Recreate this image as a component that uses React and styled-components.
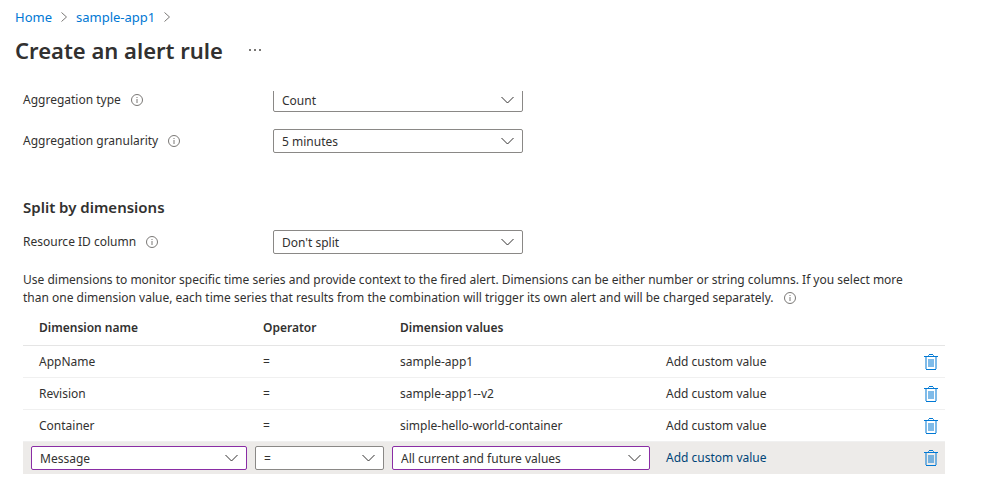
import React from "react";
import styled, { createGlobalStyle } from "styled-components";

const GlobalStyle = createGlobalStyle`
  *, *::before, *::after { box-sizing: border-box; }
  body {
    margin: 0;
    background: #fff;
    color: #323130;
    font: 12px/18px "Noto Sans", "Open Sans", sans-serif;
  }
  button, select { font: inherit; color: inherit; }
`;

const Page = styled.div`
  padding: 8px 0 30px;
`;

const Breadcrumb = styled.nav`
  display: flex;
  align-items: center;
  gap: 9px;
  padding-left: 15px;
  font-size: 13px;
  line-height: 18px;
  color: #605e5c;
`;

const Crumb = styled.a`
  color: #0078d4;
  text-decoration: none;
`;

const TitleBar = styled.header`
  display: flex;
  align-items: center;
  gap: 26px;
  height: 32px;
  margin: 8px 0 25px;
  padding-left: 15px;
`;

const Title = styled.h1`
  margin: 0;
  font-size: 22px;
  font-weight: 600;
  line-height: 32px;
`;

const IconButton = styled.button`
  display: inline-flex;
  align-items: center;
  justify-content: center;
  padding: 0;
  border: 0;
  background: none;
  vertical-align: middle;
  cursor: pointer;
`;

const Content = styled.main`
  overflow: hidden;
  padding: 0 36px 0 23px;
`;

const Field = styled.div`
  display: flex;
  align-items: center;
  height: 24px;
  margin-top: ${(p) => (p.$clipped ? "-3px" : "0")};
  margin-bottom: ${(p) => (p.$clipped ? "17px" : "0")};
`;

const FieldLabel = styled.div`
  display: flex;
  align-items: center;
  gap: 10px;
  width: 250px;
`;

const SelectBox = styled.div`
  display: grid;
  align-items: center;
  width: ${(p) => p.$width || "100%"};
  > * { grid-area: 1 / 1; }
  > svg {
    justify-self: end;
    margin-right: 9px;
    pointer-events: none;
  }
`;

const Select = styled.select`
  appearance: none;
  width: 100%;
  height: 24px;
  padding: 1px 28px 0 8px;
  border: 1px solid ${(p) => (p.$edited ? "#8a2da5" : "#8a8886")};
  border-radius: 2px;
  background: #fff;
  line-height: 18px;
`;

const SectionTitle = styled.h2`
  margin: 44px 0 12px;
  font-size: 15px;
  font-weight: 600;
  line-height: 21px;
`;

const Description = styled.p`
  max-width: 900px;
  margin: 17px 0 3px;
`;

const DescriptionInfo = styled.span`
  display: inline-flex;
  margin-left: 10px;
  vertical-align: -2px;
`;

const Table = styled.table`
  width: 100%;
  table-layout: fixed;
  border-collapse: separate;
  border-spacing: 0;
`;

const Column = styled.col`
  width: ${(p) => p.$width || "auto"};
`;

const HeadCell = styled.th`
  height: 36px;
  padding: 0 0 0 16px;
  border-bottom: 1px solid #e5e5e5;
  font-weight: 600;
  text-align: left;
`;

const Row = styled.tr`
  background: ${(p) => (p.$active ? "#edebe9" : "transparent")};
`;

const Cell = styled.td`
  height: 32px;
  padding: 0 0 0 ${(p) => (p.$control ? "8px" : "16px")};
  border-bottom: ${(p) => (p.$last ? "0" : "1px solid #f0f0f0")};
  vertical-align: middle;
`;

const ActionCell = styled(Cell)`
  padding: 0 7px 0 0;
  text-align: right;
  line-height: 0;
`;

const CustomValue = styled.button`
  display: block;
  padding: 0;
  border: 0;
  background: none;
  color: ${(p) => (p.$active ? "#004578" : "inherit")};
  line-height: 18px;
  cursor: pointer;
`;

const CrumbArrow = () => (
  <svg width="6" height="10" viewBox="0 0 6 10" fill="none" stroke="#797775" aria-hidden="true">
    <path d="M.5.5 5.5 5 .5 9.5" />
  </svg>
);

const Chevron = () => (
  <svg width="13" height="8" viewBox="0 0 13 8" fill="none" stroke="#323130" aria-hidden="true">
    <path d="M.5 1 6.500 7 12.500 1" />
  </svg>
);

const InfoIcon = () => (
  <svg width="12" height="12" viewBox="0 0 12 12" fill="none" stroke="#797775" aria-hidden="true">
    <circle cx="6" cy="6" r="5.5" />
    <path d="M6 5v4M6 3v1" />
  </svg>
);

const TrashIcon = () => (
  <svg width="14" height="16" viewBox="0 0 14 16" aria-hidden="true">
    <path d="M1 3h2v12H1zM11 3h2v12h-2zM4 5h6v8H4z" fill="#0078d4" opacity=".5" />
    <path d="M0 2h14v1H0zM2 15h10v1H2zM5 0h4v1H5z" fill="#0078d4" />
    <path d="M4 1h1v1H4zM9 1h1v1H9z" fill="#0078d4" opacity=".7" />
  </svg>
);

const MoreIcon = () => (
  <svg width="12" height="2" viewBox="0 0 12 2" fill="#797775" aria-hidden="true">
    <path d="M0 0h2v2H0zM5 0h2v2H5zM10 0h2v2h-2z" />
  </svg>
);

function Dropdown({ id, value, label, width, edited }) {
  return (
    <SelectBox $width={width}>
      <Select id={id} aria-label={label} $edited={edited} defaultValue={value}>
        <option>{value}</option>
      </Select>
      <Chevron />
    </SelectBox>
  );
}

function SelectField({ id, label, value, clipped }) {
  return (
    <Field $clipped={clipped}>
      <FieldLabel>
        <label htmlFor={id}>{label}</label>
        <IconButton type="button" aria-label={`About ${label}`}>
          <InfoIcon />
        </IconButton>
      </FieldLabel>
      <Dropdown id={id} value={value} width="250px" />
    </Field>
  );
}

const dimensions = [
  { name: "AppName", operator: "=", values: "sample-app1" },
  { name: "Revision", operator: "=", values: "sample-app1--v2" },
  { name: "Container", operator: "=", values: "simple-hello-world-container" },
];

function RowActions({ name, active }) {
  return (
    <>
      <Cell $last={active}>
        <CustomValue type="button" $active={active}>Add custom value</CustomValue>
      </Cell>
      <ActionCell $last={active}>
        <IconButton type="button" aria-label={`Delete ${name}`}>
          <TrashIcon />
        </IconButton>
      </ActionCell>
    </>
  );
}

export default function App() {
  return (
    <>
      <GlobalStyle />
      <Page>
        <Breadcrumb aria-label="Breadcrumb">
          <Crumb href="#home">Home</Crumb>
          <CrumbArrow />
          <Crumb href="#sample-app1">sample-app1</Crumb>
          <CrumbArrow />
        </Breadcrumb>
        <TitleBar>
          <Title>Create an alert rule</Title>
          <IconButton type="button" aria-label="More actions">
            <MoreIcon />
          </IconButton>
        </TitleBar>
        <Content>
          <SelectField id="aggregation-type" label="Aggregation type" value="Count" clipped />
          <SelectField id="aggregation-granularity" label="Aggregation granularity" value="5 minutes" />
          <SectionTitle>Split by dimensions</SectionTitle>
          <SelectField id="resource-column" label="Resource ID column" value="Don't split" />
          <Description>
            Use dimensions to monitor specific time series and provide context to the fired alert.
            Dimensions can be either number or string columns. If you select more than one dimension
            value, each time series that results from the combination will trigger its own alert and
            will be charged separately.
            <DescriptionInfo>
              <InfoIcon />
            </DescriptionInfo>
          </Description>
          <Table>
            <colgroup>
              <Column $width="224px" />
              <Column $width="137px" />
              <Column $width="266px" />
              <Column />
              <Column $width="37px" />
            </colgroup>
            <thead>
              <tr>
                <HeadCell scope="col">Dimension name</HeadCell>
                <HeadCell scope="col">Operator</HeadCell>
                <HeadCell scope="col" colSpan={3}>Dimension values</HeadCell>
              </tr>
            </thead>
            <tbody>
              {dimensions.map((d) => (
                <Row key={d.name}>
                  <Cell>{d.name}</Cell>
                  <Cell>{d.operator}</Cell>
                  <Cell>{d.values}</Cell>
                  <RowActions name={d.name} />
                </Row>
              ))}
              <Row $active>
                <Cell $control $last>
                  <Dropdown label="Dimension name" value="Message" edited />
                </Cell>
                <Cell $control $last>
                  <Dropdown label="Operator" value="=" />
                </Cell>
                <Cell $control $last>
                  <Dropdown label="Dimension values" value="All current and future values" edited />
                </Cell>
                <RowActions name="Message" active />
              </Row>
            </tbody>
          </Table>
        </Content>
      </Page>
    </>
  );
}
